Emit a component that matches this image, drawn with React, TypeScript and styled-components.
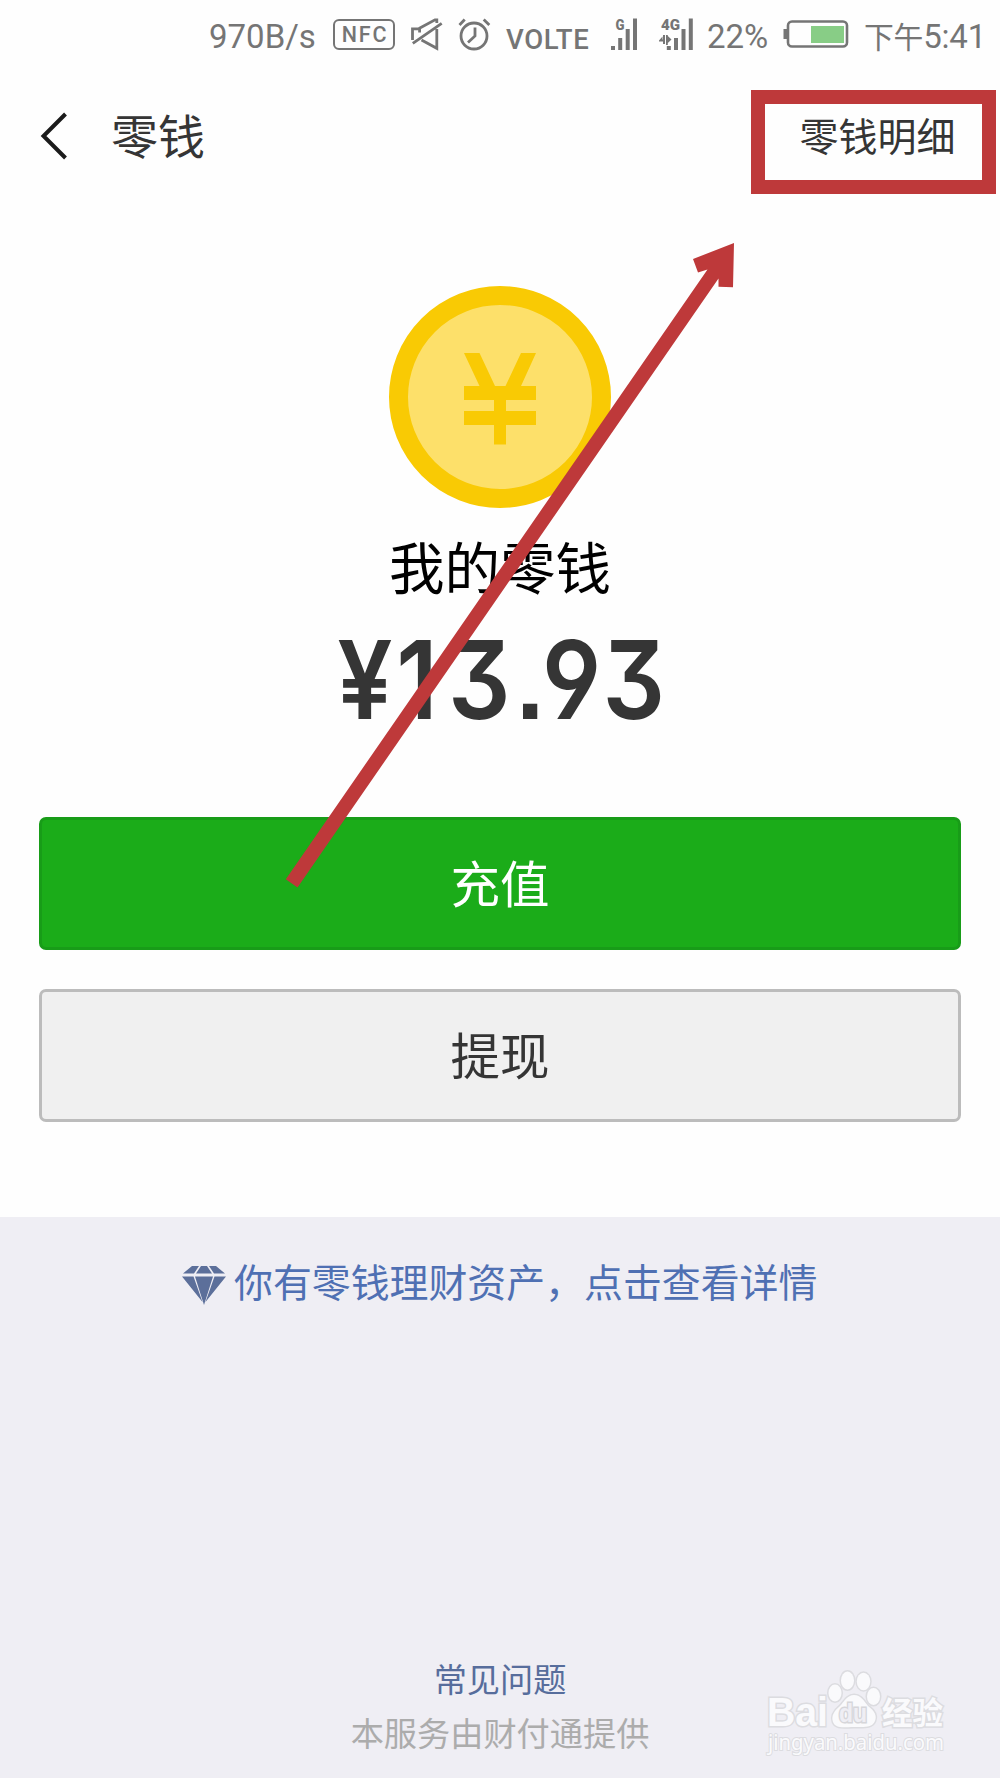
import React from "react";
import styled, { createGlobalStyle } from "styled-components";

const Global = createGlobalStyle`
  * { box-sizing: border-box; }
  body {
    margin: 0;
    background: #fefefe;
    font-family: Roboto, "Noto Sans CJK SC", sans-serif;
  }
`;

const Screen = styled.main`
  position: relative;
  width: 1000px;
  height: 1778px;
  overflow: hidden;
  display: flex;
  flex-direction: column;
  background: #fefefe;
`;

const StatusBar = styled.div`
  height: 72px;
  flex: none;
  display: flex;
  align-items: flex-start;
  padding-left: 209px;
  color: #757575;
`;

const StatusText = styled.span<{ $w: number; $size?: number; $top?: number; $weight?: number; $track?: number }>`
  width: ${(p) => p.$w}px;
  flex: none;
  margin-top: ${(p) => p.$top ?? 17}px;
  font-size: ${(p) => p.$size ?? 33}px;
  font-weight: ${(p) => p.$weight ?? 400};
  letter-spacing: ${(p) => p.$track ?? 0}px;
  line-height: 40px;
  white-space: nowrap;
`;

const Meridiem = styled.span`
  font-size: 29.8px;
  line-height: 1;
  vertical-align: 0.5px;
`;

const NfcBadge = styled.span`
  width: 62px;
  height: 31px;
  margin: 19px 7px 0 0;
  flex: none;
  display: flex;
  align-items: center;
  justify-content: center;
  border: 2.5px solid #757575;
  border-radius: 6px;
  font-size: 21.5px;
  font-weight: 500;
  letter-spacing: 1.8px;
  padding: 0 0 0 2px;
`;

const StatusIcon = styled.svg<{ $gap?: number }>`
  flex: none;
  display: block;
  margin-right: ${(p) => p.$gap ?? 0}px;
`;

const Header = styled.header`
  height: 128px;
  flex: none;
  display: flex;
  align-items: center;
  padding: 0 44.5px 0 39px;
  color: #353535;
`;

const BackIcon = styled.svg`
  width: 32px;
  height: 52px;
  margin-right: 40px;
`;

const Title = styled.h1`
  flex: 1;
  margin: 3px 0 0;
  font-size: 47px;
  line-height: 60px;
  font-weight: 400;
`;

const DetailLink = styled.a`
  margin-top: 3px;
  font-size: 39px;
  line-height: 50px;
`;

const Wallet = styled.section`
  height: 1017px;
  flex: none;
  display: flex;
  flex-direction: column;
  align-items: center;
  padding: 86px 39px 0;
`;

const Coin = styled.svg`
  width: 222px;
  height: 222px;
  flex: none;
`;

const WalletLabel = styled.div`
  margin-top: 28px;
  height: 70px;
  font-size: 55.5px;
  line-height: 70px;
  color: #000;
`;

const Amount = styled.div`
  height: 110px;
  margin-top: 18px;
  padding-left: 6px;
  font-family: Inter, sans-serif;
  font-size: 109px;
  font-weight: 570;
  line-height: 110px;
  letter-spacing: 4.2px;
  color: #353535;
  font-feature-settings: "cv09", "cv04", "ss01", "ss07";
  white-space: nowrap;
  transform: scaleX(0.9);
`;

const Tracked = styled.span<{ $space: number }>`
  letter-spacing: ${(p) => p.$space}px;
`;

const Actions = styled.div`
  width: 100%;
  margin-top: 83px;
  display: flex;
  flex-direction: column;
  gap: 39.5px;
`;

const Button = styled.button<{ $primary?: boolean }>`
  width: 100%;
  height: 132.5px;
  padding: 0 0 4px;
  border: 3px solid ${(p) => (p.$primary ? "#189c18" : "#bcbcbc")};
  border-radius: 7px;
  background: ${(p) => (p.$primary ? "#1bac19" : "#f0f0f0")};
  color: ${(p) => (p.$primary ? "#fff" : "#353535")};
  font-family: "Noto Sans CJK SC", sans-serif;
  font-size: 49.5px;
`;

const Lower = styled.section`
  flex: 1;
  display: flex;
  flex-direction: column;
  align-items: center;
  background: #efeef4;
`;

const Promo = styled.a`
  width: 100%;
  height: 60px;
  margin-top: 39px;
  padding-left: 182px;
  display: flex;
  align-items: flex-start;
  color: #4f70b3;
  font-size: 38.9px;
  line-height: 56px;
  white-space: nowrap;
`;

const Diamond = styled.svg`
  width: 44px;
  height: 40px;
  margin: 10px 8px 0 0;
  flex: none;
`;

const Footer = styled.footer`
  flex: 1;
  width: 100%;
  display: flex;
  flex-direction: column;
  justify-content: flex-end;
  align-items: center;
  padding-bottom: 17px;
`;

const FooterLine = styled.span<{ $color: string }>`
  height: 53.5px;
  line-height: 53.5px;
  font-size: 33.2px;
  color: ${(p) => p.$color};
`;

const Frame = styled.div`
  position: absolute;
  left: 751px;
  top: 90px;
  width: 245px;
  height: 104px;
  border: 14px solid #be393a;
`;

const Arrow = styled.svg`
  position: absolute;
  left: 0;
  top: 0;
  width: 1000px;
  height: 900px;
  pointer-events: none;
`;

const Watermark = styled.svg`
  position: absolute;
  left: 760px;
  top: 1664px;
  width: 200px;
  height: 100px;
`;

const Bars = () => (
  <g fill="#757575">
    <rect x="0" y="27.5" width="4" height="4" />
    <rect x="7.2" y="19.5" width="4" height="12" />
    <rect x="14.7" y="10.5" width="4" height="21" />
    <rect x="22" y="0" width="4" height="31.5" />
  </g>
);

export default function App() {
  return (
    <>
      <Global />
      <Screen>
        <StatusBar>
          <StatusText $w={124}>970B/s</StatusText>
          <NfcBadge>NFC</NfcBadge>
          <StatusIcon width="48" height="60" $gap={5} viewBox="402 0 48 60" fill="none" stroke="#757575" strokeWidth="2.8">
            <path d="M412.5 40V28.8H419.6V32.5M419 28.5L435 19.8H436.8V23M412.8 43.3L441.7 23.3M436.8 29V48.3L421.5 40" />
          </StatusIcon>
          <StatusIcon width="46" height="60" $gap={5} viewBox="455 0 46 60" fill="none" stroke="#757575" strokeWidth="2.8">
            <circle cx="474" cy="36" r="13" />
            <path d="M475 27.5V36L468 42.5M459.5 25L464.7 19.5M483.7 19.5L489.3 25" />
          </StatusIcon>
          <StatusText $w={97} $size={27.5} $top={20} $weight={500} $track={0.6}>VOLTE</StatusText>
          <StatusIcon width="42" height="60" $gap={6} viewBox="603 0 42 60">
            <g transform="translate(611 18.5)"><Bars /></g>
            <text x="615.5" y="30" fontSize="15.5" fontWeight="900" fill="#757575" textLength="9" lengthAdjust="spacingAndGlyphs">G</text>
          </StatusIcon>
          <StatusIcon width="56" height="60" viewBox="651 0 56 60">
            <g transform="translate(666.8 18.5)"><Bars /></g>
            <text x="661" y="30" fontSize="15.5" fontWeight="900" fill="#757575" textLength="19" lengthAdjust="spacingAndGlyphs">4G</text>
            <path d="M659 40.5L662.5 36.5V39.5H663V35H665V44H663V41.5H659ZM671.5 39.5L667.8 36V35H666V45H667.8V43Z" fill="#757575" />
          </StatusIcon>
          <StatusText $w={75}>22%</StatusText>
          <StatusIcon width="72" height="60" $gap={10} viewBox="782 0 72 60">
            <rect x="788" y="21.5" width="59" height="25" rx="4" fill="none" stroke="#757575" strokeWidth="2.6" />
            <rect x="783.5" y="29" width="4" height="10" fill="#757575" />
            <rect x="811" y="26" width="33" height="17" fill="#88cd86" />
          </StatusIcon>
          <StatusText $w={125} $track={-0.2}><Meridiem>下午</Meridiem>5:41</StatusText>
        </StatusBar>

        <Header>
          <BackIcon viewBox="39 110 32 52" fill="none" stroke="#1b1b1b" strokeWidth="4">
            <path d="M65.5 114L43.5 136L65.5 158" />
          </BackIcon>
          <Title>零钱</Title>
          <DetailLink>零钱明细</DetailLink>
        </Header>

        <Wallet>
          <Coin viewBox="389 286 222 222">
            <circle cx="500" cy="397" r="101.5" fill="#fde06a" stroke="#f9ca04" strokeWidth="19" />
            <g fill="#f9ca04">
              <path d="M464 353H479.5L495 386H479.5ZM536 353H521L505.5 386H521Z" />
              <rect x="464" y="386" width="72" height="14" />
              <rect x="464" y="411" width="72" height="14" />
              <rect x="494" y="386" width="12" height="58.5" />
            </g>
          </Coin>
          <WalletLabel>我的零钱</WalletLabel>
          <Amount>
            ¥<Tracked $space={11.5}>1</Tracked>3<Tracked $space={1.5}>.9</Tracked>3
          </Amount>
          <Actions>
            <Button $primary>充值</Button>
            <Button>提现</Button>
          </Actions>
        </Wallet>

        <Lower>
          <Promo>
            <Diamond viewBox="0 0 44 40" fill="#5c6f9a">
              <path d="M10 0H17L12 7.5H1ZM19 0H25L30 7.5H14ZM27 0H34L43 7.5H32ZM0 10.5H11.5L20.5 36ZM13 10.5H31L22 39ZM32.5 10.5H44L23.5 36Z" />
            </Diamond>
            你有零钱理财资产，点击查看详情
          </Promo>
          <Footer>
            <FooterLine $color="#576d9c">常见问题</FooterLine>
            <FooterLine $color="#acacac">本服务由财付通提供</FooterLine>
          </Footer>
        </Lower>

        <Frame />
        <Arrow viewBox="0 0 1000 900">
          <path fill="#be393a" d="M734 243L693 259L698 272.5L707.5 269.5L285.8 879.3L297.5 887.5L718.5 278.5V286.7L733 287.3Z" />
        </Arrow>
        <Watermark viewBox="760 1664 200 100" fill="#fafafc" stroke="#dcdce0" strokeWidth="3" paintOrder="stroke">
          <ellipse cx="835" cy="1693" rx="6.5" ry="8.5" />
          <ellipse cx="847.5" cy="1680.5" rx="6.5" ry="9" />
          <ellipse cx="863.5" cy="1681.5" rx="6.7" ry="8.7" />
          <ellipse cx="873.5" cy="1696.5" rx="6.5" ry="8.5" />
          <path d="M854 1695C861 1695 864 1701 868 1706C875 1711 877 1716 875 1721C872 1728 865 1727 854 1727C843 1727 836 1729 833 1722C831 1716 834 1711 840 1706C844 1702 847 1695 854 1695Z" />
          <text x="767" y="1726" fontFamily="Liberation Sans" fontWeight="700" fontSize="40" textLength="61" lengthAdjust="spacingAndGlyphs">Bai</text>
          <text x="839" y="1721.5" fontFamily="Liberation Sans" fontWeight="700" fontSize="25" fill="#efeef4" stroke="#d6d6da" textLength="28" lengthAdjust="spacingAndGlyphs">du</text>
          <text x="882" y="1724" fontFamily="Noto Sans CJK SC" fontWeight="700" fontSize="31" textLength="61" lengthAdjust="spacingAndGlyphs">经验</text>
          <text x="768" y="1750" fontFamily="Noto Sans" fontSize="21" strokeWidth="2" textLength="176" lengthAdjust="spacingAndGlyphs">jingyan.baidu.com</text>
        </Watermark>
      </Screen>
    </>
  );
}
